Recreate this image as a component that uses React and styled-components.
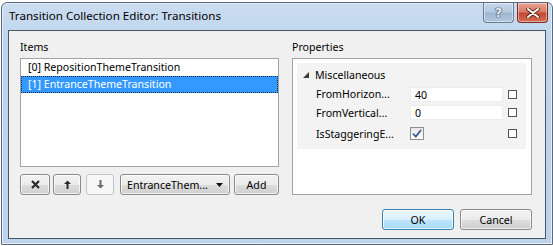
import React from "react";
import styled, { createGlobalStyle } from "styled-components";

const Global = createGlobalStyle`
  html, body { margin: 0; padding: 0; background: #ffffff; }
  body { width: 553px; height: 246px; overflow: hidden; font-family: "Noto Sans", "DejaVu Sans", sans-serif; font-size: 10.6px; color: #000; }
  * { box-sizing: border-box; }
`;

const Window = styled.div`
  margin: 2px 0 0 1px;
  width: 552px;
  height: 243px;
  border: 1px solid #5a6a7c;
  border-radius: 6px 6px 0 0;
  background: linear-gradient(#cadcf0, #bfd5ed 40px, #bdd3ec);
  display: flex;
  flex-direction: column;
  box-shadow: inset 0 0 0 1px #e4eef9;
`;

const TitleBar = styled.div`
  height: 27px;
  display: flex;
  align-items: flex-start;
  padding-left: 7px;
`;

const Title = styled.div`
  flex: 1;
  line-height: 26px;
  font-size: 11.6px;
  color: #000;
`;

const CaptionButtons = styled.div`
  display: flex;
  gap: 3px;
  margin-right: 4px;
`;

const CaptionButton = styled.div`
  width: 31px;
  height: 20px;
  border: 1px solid ${(p) => (p.$close ? "#7a2a20" : "#6a7d94")};
  border-top: none;
  border-radius: 0 0 4px 4px;
  background: ${(p) =>
    p.$close
      ? "linear-gradient(#e8a493, #d77a66 45%, #c44a33 55%, #d26e55)"
      : "linear-gradient(#c8d8ea, #b4c8de 45%, #9fb7d2 55%, #b2c7de)"};
  display: flex;
  align-items: center;
  justify-content: center;
  box-shadow: inset 0 0 0 1px rgba(255, 255, 255, 0.45);
`;

const HelpGlyph = styled.span`
  font-family: "DejaVu Sans", sans-serif;
  font-weight: bold;
  font-size: 13px;
  color: #e8eef5;
  text-shadow: 0 0 1px #3d4f66, 0 0 1px #3d4f66, 0 0 1px #3d4f66, 0 0 1px #3d4f66;
  line-height: 1;
`;

const Client = styled.div`
  flex: 1;
  margin: 0 6px 5px 6px;
  border: 1px solid #4a5566;
  background: #f0f0f0;
  display: flex;
  flex-direction: column;
  padding: 8px 13px 8px 11px;
`;

const Panels = styled.div`
  display: flex;
  gap: 13px;
`;

const Column = styled.div`
  width: ${(p) => p.$w}px;
  display: flex;
  flex-direction: column;
`;

const Label = styled.div`
  height: 16px;
  line-height: 16px;
  margin-bottom: 3px;
`;

const ListBox = styled.div`
  height: 109px;
  border: 1px solid #a3a3a3;
  background: #fff;
`;

const ListRow = styled.div`
  height: 17px;
  line-height: 17px;
  padding-left: 7px;
  white-space: nowrap;
  color: ${(p) => (p.$selected ? "#fff" : "#000")};
  background: ${(p) => (p.$selected ? "#3399ff" : "transparent")};
  outline: ${(p) => (p.$selected ? "1px dotted #0d2a4a" : "none")};
  outline-offset: -1px;
`;

const ButtonRow = styled.div`
  display: flex;
  margin-top: 7px;
  height: 21px;
`;

const Button = styled.div`
  width: ${(p) => p.$w}px;
  height: 21px;
  margin-right: ${(p) => p.$mr || 0}px;
  border: 1px solid ${(p) => (p.$disabled ? "#c2c5c8" : p.$default ? "#3c7fb1" : "#8a8a8a")};
  border-radius: 3px;
  background: ${(p) =>
    p.$disabled
      ? "#f7f7f7"
      : p.$default
      ? "linear-gradient(#eaf6fd, #d9f0fc 50%, #bee6fd 51%, #a7d9f5)"
      : "linear-gradient(#f2f2f2, #ebebeb 50%, #dddddd 51%, #cfcfcf)"};
  box-shadow: inset 0 0 0 1px ${(p) => (p.$disabled ? "transparent" : "rgba(255,255,255,0.7)")};
  display: flex;
  align-items: center;
  justify-content: center;
  color: #000;
  white-space: nowrap;
`;

const SelectButton = styled(Button)`
  justify-content: flex-start;
  padding: 0 6px 0 6px;
  & > svg { margin-left: auto; }
`;

const GridBox = styled.div`
  height: 137px;
  border: 1px solid #a3a3a3;
  background: #fff;
  padding: 4px 5px 0 4px;
`;

const Category = styled.div`
  background: #f3f3f3;
  padding: 2px 0 4px 0;
`;

const CategoryHeader = styled.div`
  height: 20px;
  display: flex;
  align-items: center;
  padding-left: 6px;
  gap: 6px;
`;

const PropRow = styled.div`
  height: ${(p) => p.$h}px;
  display: flex;
  align-items: center;
  padding-left: 19px;
`;

const PropName = styled.div`
  width: 94px;
  white-space: nowrap;
`;

const ValueBox = styled.div`
  width: 93px;
  height: 15px;
  line-height: 14px;
  background: #fff;
  border: 1px solid #ececec;
  padding-left: 4px;
`;

const ValueCell = styled.div`
  width: 93px;
  display: flex;
  align-items: center;
`;

const Marker = styled.div`
  width: 9px;
  height: 9px;
  margin-left: 5px;
  border: 1px solid #555;
  background: #fff;
`;

const CheckBox = styled.div`
  width: 14px;
  height: 13px;
  border: 1px solid #8e8f8f;
  background: linear-gradient(#e6e6e6, #ffffff);
  display: flex;
  align-items: center;
  justify-content: center;
`;

const Footer = styled.div`
  margin-top: auto;
  display: flex;
  justify-content: flex-end;
  gap: 6px;
`;

const Triangle = () => (
  <svg width="6" height="6" viewBox="0 0 6 6">
    <path d="M6 0 L6 6 L0 6 Z" fill="#3b3b3b" />
  </svg>
);

const XIcon = ({ color = "#2b2b2b" }) => (
  <svg width="9" height="9" viewBox="0 0 9 9">
    <path d="M1 1 L8 8 M8 1 L1 8" stroke={color} strokeWidth="2.2" />
  </svg>
);

const Arrow = ({ down, color }) => (
  <svg width="7" height="9" viewBox="0 0 7 9" style={{ transform: down ? "rotate(180deg)" : "none" }}>
    <path d="M3.5 0.5 L7 4 L4.5 4 L4.5 9 L2.5 9 L2.5 4 L0 4 Z" fill={color} />
  </svg>
);

const CloseGlyph = () => (
  <svg width="14" height="10" viewBox="0 0 14 10">
    <path d="M2 1 L12 9 M12 1 L2 9" stroke="#5a1a10" strokeWidth="3.6" strokeLinecap="round" />
    <path d="M2 1 L12 9 M12 1 L2 9" stroke="#ffffff" strokeWidth="2" strokeLinecap="round" />
  </svg>
);

const Check = () => (
  <svg width="10" height="9" viewBox="0 0 10 9">
    <path d="M1 4.5 L3.8 7.5 L9 1" fill="none" stroke="#3a5a9a" strokeWidth="1.8" />
  </svg>
);

const DropArrow = () => (
  <svg width="7" height="4" viewBox="0 0 7 4">
    <path d="M0 0 L7 0 L3.5 4 Z" fill="#111" />
  </svg>
);

export default function App() {
  return (
    <>
      <Global />
      <Window>
        <TitleBar>
          <Title>Transition Collection Editor: Transitions</Title>
          <CaptionButtons>
            <CaptionButton>
              <HelpGlyph>?</HelpGlyph>
            </CaptionButton>
            <CaptionButton $close>
              <CloseGlyph />
            </CaptionButton>
          </CaptionButtons>
        </TitleBar>
        <Client>
          <Panels>
            <Column $w={259}>
              <Label>Items</Label>
              <ListBox>
                <ListRow>[0] RepositionThemeTransition</ListRow>
                <ListRow $selected>[1] EntranceThemeTransition</ListRow>
              </ListBox>
              <ButtonRow>
                <Button $w={30} $mr={3}>
                  <XIcon />
                </Button>
                <Button $w={28} $mr={5}>
                  <Arrow color="#2b2b2b" />
                </Button>
                <Button $w={28} $mr={6} $disabled>
                  <Arrow down color="#6b6b6b" />
                </Button>
                <SelectButton $w={110} $mr={4}>
                  <span>EntranceThem...</span>
                  <DropArrow />
                </SelectButton>
                <Button $w={45}>Add</Button>
              </ButtonRow>
            </Column>
            <Column $w={240}>
              <Label>Properties</Label>
              <GridBox>
                <Category>
                  <CategoryHeader>
                    <Triangle />
                    <span>Miscellaneous</span>
                  </CategoryHeader>
                  <PropRow $h={18}>
                    <PropName>FromHorizon...</PropName>
                    <ValueBox>40</ValueBox>
                    <Marker />
                  </PropRow>
                  <PropRow $h={19}>
                    <PropName>FromVertical...</PropName>
                    <ValueBox>0</ValueBox>
                    <Marker />
                  </PropRow>
                  <PropRow $h={23}>
                    <PropName>IsStaggeringE...</PropName>
                    <ValueCell>
                      <CheckBox>
                        <Check />
                      </CheckBox>
                    </ValueCell>
                    <Marker />
                  </PropRow>
                </Category>
              </GridBox>
            </Column>
          </Panels>
          <Footer>
            <Button $w={72} $default>OK</Button>
            <Button $w={72}>Cancel</Button>
          </Footer>
        </Client>
      </Window>
    </>
  );
}
